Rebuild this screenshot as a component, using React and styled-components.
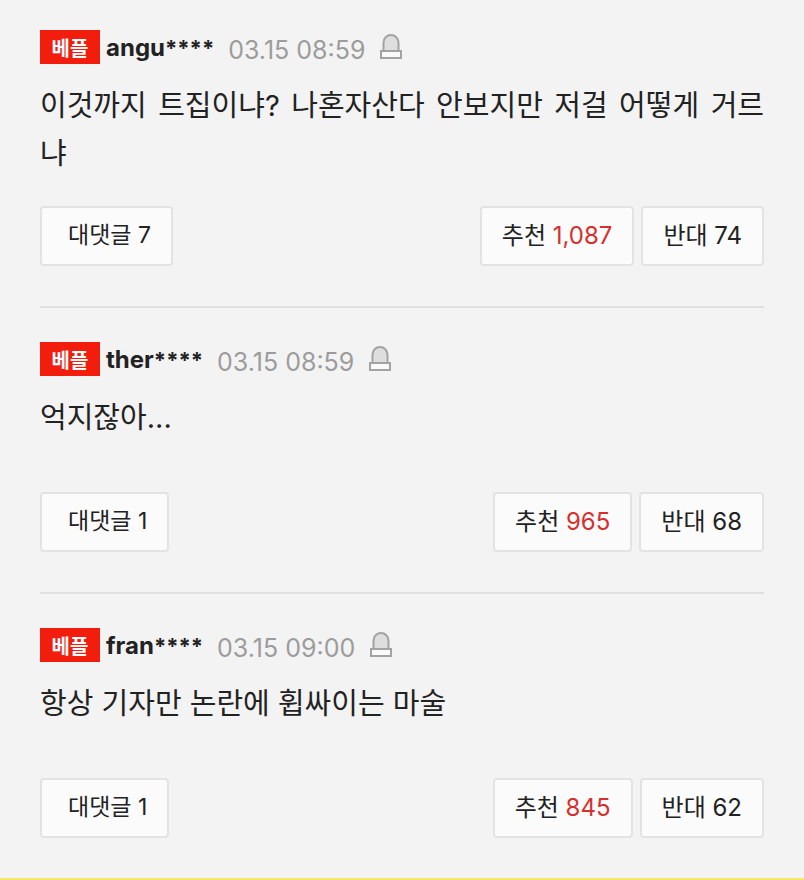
import React from 'react';
import styled, { createGlobalStyle } from 'styled-components';

const GlobalStyle = createGlobalStyle`
  * {
    box-sizing: border-box;
  }

  body {
    margin: 0;
    background: #f3f3f3;
    color: #222;
    font-family: Inter, 'Noto Sans CJK KR', sans-serif;
  }
`;

const CommentList = styled.ul`
  margin: 0;
  padding: 0 40px;
  list-style: none;
  border-bottom: 2px solid #f5e866;
`;

const Comment = styled.li`
  padding: 30px 0 40px;

  & + & {
    padding-top: 34px;
    border-top: 2px solid #e0e0e0;
  }
`;

const Meta = styled.div`
  display: flex;
  align-items: center;
  height: 34px;
`;

const Badge = styled.span`
  width: 60px;
  height: 34px;
  margin-right: 6px;
  padding-top: 2px;
  background: #f21d0d;
  color: #fff;
  font-size: 20px;
  font-weight: 700;
  line-height: 34px;
  text-align: center;
`;

const Author = styled.strong`
  font-size: 24px;
  font-weight: 700;
`;

const Mask = styled.span`
  font-size: 22px;
`;

const PostedAt = styled.time`
  margin: 6px 14px 0;
  color: #9c9c9c;
  font-size: 25px;
`;

const ReportButton = styled.button`
  display: flex;
  padding: 0;
  border: 0;
  background: none;
`;

const Content = styled.p`
  min-height: 70px;
  margin: 18px 0 0;
  font-size: 29px;
  line-height: 48px;
  text-align: justify;
  word-break: break-all;
`;

const Actions = styled.div`
  display: flex;
  gap: 7px;
  margin-top: 28px;
`;

const ActionButton = styled.button`
  height: 60px;
  padding: 0 20px 6px;
  border: 2px solid #e3e3e3;
  border-radius: 4px;
  background: #fbfbfb;
  color: #222;
  font: inherit;
  font-size: 24px;
`;

const ReplyButton = styled(ActionButton)`
  margin-right: auto;
  padding: 0 20px 6px 26px;
  font-size: 23px;
`;

const Count = styled.span`
  color: ${props => (props.$red ? '#d6302e' : 'inherit')};
`;

const SirenIcon = () => (
  <svg width="24" height="28" viewBox="0 0 24 28" stroke="#a3a3a3" strokeWidth="2" aria-hidden="true">
    <path d="M4.5 18V9.500a7.500 7.500 0 0 1 15 0V18" fill="#dedede" />
    <path d="M2 18h20v7H2z" fill="#fafafa" />
  </svg>
);

const comments = [
  { author: 'angu', time: '03.15 08:59', text: '이것까지 트집이냐? 나혼자산다 안보지만 저걸 어떻게 거르냐', replies: 7, up: '1,087', down: 74 },
  { author: 'ther', time: '03.15 08:59', text: '억지잖아...', replies: 1, up: '965', down: 68 },
  { author: 'fran', time: '03.15 09:00', text: '항상 기자만 논란에 휩싸이는 마술', replies: 1, up: '845', down: 62 },
];

const App = () => (
  <>
    <GlobalStyle />
    <CommentList>
      {comments.map(({ author, time, text, replies, up, down }) => (
        <Comment key={author}>
          <Meta>
            <Badge>베플</Badge>
            <Author>
              {author}
              <Mask>****</Mask>
            </Author>
            <PostedAt>{time}</PostedAt>
            <ReportButton type="button" aria-label="신고">
              <SirenIcon />
            </ReportButton>
          </Meta>
          <Content>{text}</Content>
          <Actions>
            <ReplyButton type="button">대댓글 {replies}</ReplyButton>
            <ActionButton type="button">
              추천 <Count $red>{up}</Count>
            </ActionButton>
            <ActionButton type="button">
              반대 <Count>{down}</Count>
            </ActionButton>
          </Actions>
        </Comment>
      ))}
    </CommentList>
  </>
);

export default App;
